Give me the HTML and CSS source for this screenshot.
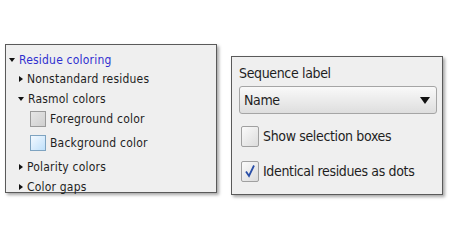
FILE: index.html
```html
<!DOCTYPE html>
<html lang="en">
<head>
    <meta charset="UTF-8">
    <title>Sequence options</title>
    <link rel="stylesheet" href="styles.css">
</head>
<body>
    <div class="stage">
        <div class="panel tree-panel">
            <div class="tree-row top-row">
                <span class="arrow down"></span>
                <span class="tree-title">Residue coloring</span>
            </div>
            <div class="tree-row sub-row">
                <span class="arrow right"></span>
                <span>Nonstandard residues</span>
            </div>
            <div class="tree-row sub-row">
                <span class="arrow down"></span>
                <span>Rasmol colors</span>
            </div>
            <div class="color-row">
                <span class="swatch swatch-fg"></span>
                <span>Foreground color</span>
            </div>
            <div class="color-row">
                <span class="swatch swatch-bg"></span>
                <span>Background color</span>
            </div>
            <div class="tree-row sub-row gap-row">
                <span class="arrow right"></span>
                <span>Polarity colors</span>
            </div>
            <div class="tree-row sub-row">
                <span class="arrow right"></span>
                <span>Color gaps</span>
            </div>
        </div>

        <div class="panel label-panel">
            <div class="field-label">Sequence label</div>
            <div class="select-box">
                <span>Name</span>
                <span class="select-arrow"></span>
            </div>
            <div class="check-row">
                <span class="checkbox"></span>
                <span>Show selection boxes</span>
            </div>
            <div class="check-row">
                <span class="checkbox">
                    <svg width="14" height="16" viewBox="0 0 14 16">
                        <path d="M3 8.5 L6 13 L11 2.5" fill="none" stroke="#2a4fa8" stroke-width="1.8"/>
                    </svg>
                </span>
                <span>Identical residues as dots</span>
            </div>
        </div>
    </div>
</body>
</html>
```

FILE: styles.css
```css
body {
    margin: 0;
    background: #ffffff;
    font-family: Tahoma, "DejaVu Sans", sans-serif;
    color: #1e1e1e;
}

.stage {
    display: flex;
    align-items: flex-start;
    width: 450px;
    height: 250px;
}

.panel {
    background: #efefef;
    border: 1px solid #5a5a5a;
    box-shadow: 2px 2px 3px rgba(0,0,0,0.35);
}

/* left tree panel */
.tree-panel {
    margin: 44px 0 0 5px;
    width: 210px;
    height: 147px;
    font-family: "DejaVu Sans Condensed", "DejaVu Sans", sans-serif;
    font-size: 12px;
    letter-spacing: 0.2px;
}

.tree-row {
    display: flex;
    align-items: center;
    height: 19.5px;
}

.top-row {
    margin-top: 5px;
    padding-left: 3px;
}

.sub-row {
    padding-left: 12px;
}

.tree-title {
    color: #2f2fcf;
}

.arrow {
    width: 0;
    height: 0;
    margin-right: 4px;
}

.arrow.down {
    border-left: 3px solid transparent;
    border-right: 3px solid transparent;
    border-top: 4px solid #111;
}

.arrow.right {
    border-top: 3px solid transparent;
    border-bottom: 3px solid transparent;
    border-left: 4px solid #111;
    margin-left: 1px;
}

.color-row {
    display: flex;
    align-items: center;
    gap: 4px;
    height: 24px;
    padding-left: 24px;
}

.color-row:first-of-type,
.tree-row + .color-row {
    margin-top: -2px;
}

.gap-row {
    margin-top: 3px;
}

.swatch {
    width: 14px;
    height: 14px;
    border: 1px solid #9a9a9a;
}

.swatch-fg {
    background: linear-gradient(135deg, #e6e6e6, #cfcfcf);
}

.swatch-bg {
    border-color: #7ea3c0;
    background: linear-gradient(135deg, #f3f9ff, #bfe0fa);
}

/* right label panel */
.label-panel {
    margin: 56px 0 0 14px;
    width: 212px;
    height: 139px;
    padding: 0 5px 0 7px;
    box-sizing: border-box;
    font-family: "DejaVu Sans Condensed", "DejaVu Sans", sans-serif;
    font-size: 14px;
    letter-spacing: -0.35px;
}

.field-label {
    margin-top: 7px;
    height: 20px;
    line-height: 18px;
}

.select-box {
    display: flex;
    align-items: center;
    justify-content: space-between;
    height: 26px;
    margin-top: 2px;
    padding: 0 6px 0 4px;
    border: 1px solid #a5a5a5;
    border-radius: 3px;
    background: linear-gradient(#f9f9f9, #dedede);
}

.select-arrow {
    width: 0;
    height: 0;
    border-left: 5px solid transparent;
    border-right: 5px solid transparent;
    border-top: 7px solid #111;
}

.check-row {
    display: flex;
    align-items: center;
    gap: 4px;
    height: 22px;
    margin-top: 11px;
    padding-left: 2px;
}

.check-row + .check-row {
    margin-top: 13px;
}

.checkbox {
    display: flex;
    align-items: center;
    justify-content: center;
    width: 16px;
    height: 19px;
    border: 1px solid #a0a0a0;
    border-radius: 2px;
    background: linear-gradient(135deg, #fafafa, #dcdcdc);
}
```
